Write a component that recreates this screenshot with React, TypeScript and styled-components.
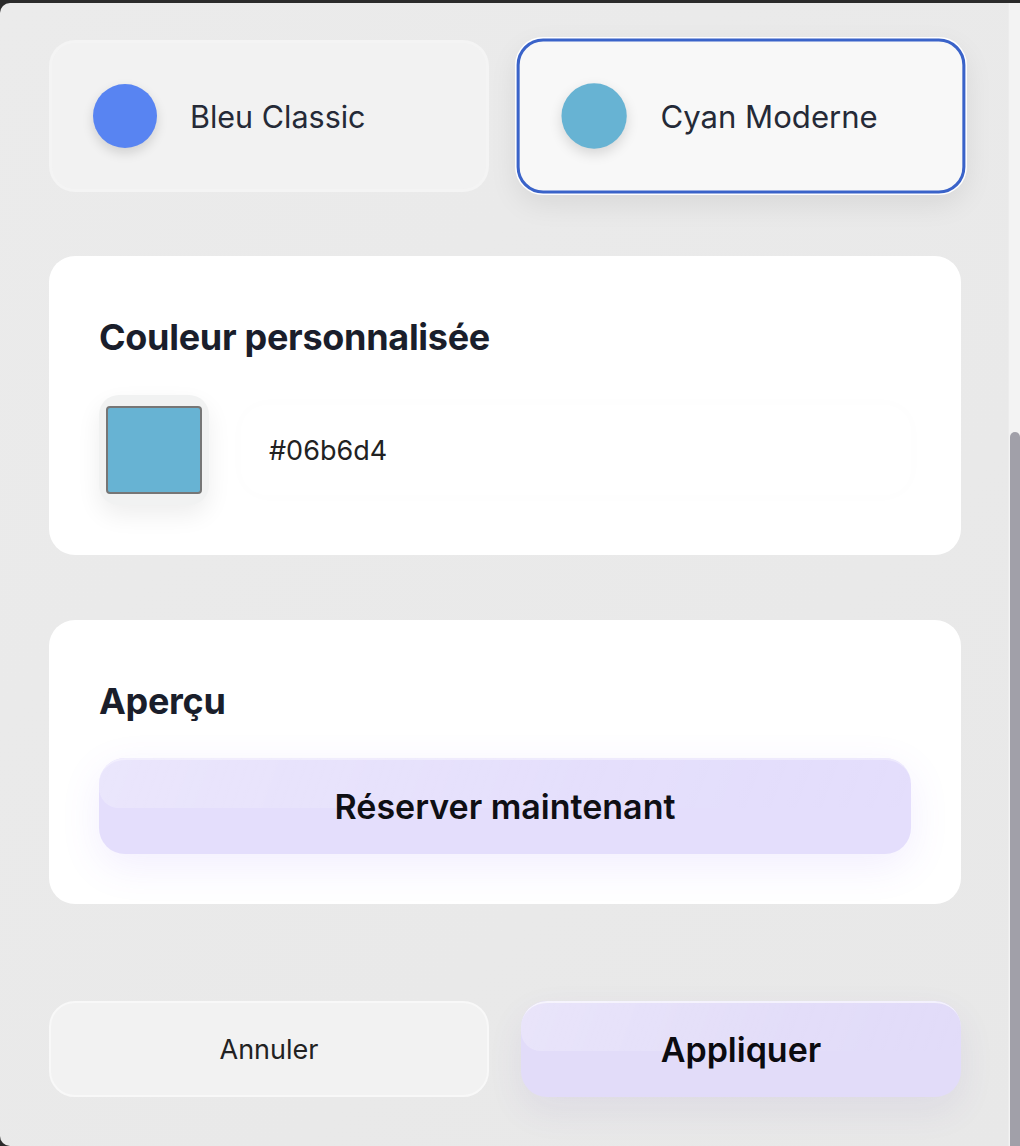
import React from "react";
import styled, { createGlobalStyle, css } from "styled-components";

const Global = createGlobalStyle`
  html, body { margin: 0; padding: 0; background: #2b2b2b; }
  body { font-family: Inter, "Noto Sans", "Liberation Sans", sans-serif; -webkit-font-smoothing: antialiased; }
  * { box-sizing: border-box; }
`;

const Panel = styled.div`
  margin-top: 3px;
  height: 1143px;
  width: 1020px;
  display: flex;
  background: linear-gradient(135deg, #ebebeb 0%, #e8e8e8 100%);
  border-radius: 10px 0 0 10px;
  overflow: hidden;
`;

const Content = styled.div`
  flex: 1;
  display: flex;
  flex-direction: column;
  padding: 37px 47px 0 49px;
`;

const Track = styled.div`
  width: 12px;
  background: #f3f3f3;
  display: flex;
  flex-direction: column;
  justify-content: flex-end;
  border-left: 1px solid #ececec;
`;

const Thumb = styled.div`
  height: 714px;
  margin-left: 1px;
  background: #a1a0a9;
  border-radius: 6px 6px 0 0;
`;

const ThemeRow = styled.div`
  display: grid;
  grid-template-columns: 1fr 1fr;
  gap: 32px;
`;

const ThemeCard = styled.div<{ $selected?: boolean }>`
  height: 152px;
  display: flex;
  align-items: center;
  gap: 33px;
  padding-left: 41px;
  border-radius: 26px;
  background: #f2f2f2;
  border: 3px solid rgba(244, 244, 244, 0.9);
  ${(p) =>
    p.$selected &&
    css`
      background: #f8f8f8;
      border: 3px solid #3a63c9;
      box-shadow: 0 0 0 1.5px #ffffff, 0 10px 28px rgba(0, 0, 0, 0.08);
      transform: scale(1.02);
    `}
`;

const Dot = styled.div<{ $color: string }>`
  width: 64px;
  height: 64px;
  border-radius: 50%;
  background: ${(p) => p.$color};
  box-shadow: 0 5px 12px rgba(0, 0, 0, 0.14);
  flex-shrink: 0;
`;

const ThemeName = styled.span`
  font-size: 30.5px;
  font-weight: 400;
  color: #252a37;
`;

const Card = styled.div<{ $top: number }>`
  margin-top: ${(p) => p.$top}px;
  background: #ffffff;
  border-radius: 26px;
  padding: 50px;
  display: flex;
  flex-direction: column;
`;

const CardTitle = styled.h2`
  margin: 0;
  padding-top: 4px;
  font-size: 36px;
  line-height: 54px;
  font-weight: 700;
  letter-spacing: -0.3px;
  color: #1a1e2b;
`;

const ColorRow = styled.div`
  margin-top: 31px;
  display: flex;
  align-items: center;
  gap: 32px;
`;

const SwatchWrap = styled.div`
  width: 110px;
  height: 110px;
  border-radius: 20px;
  background: #f1f2f2;
  display: flex;
  align-items: center;
  justify-content: center;
  box-shadow: 0 10px 24px rgba(0, 0, 0, 0.07);
  flex-shrink: 0;
`;

const Swatch = styled.div<{ $color: string }>`
  width: 96px;
  height: 88px;
  border: 2px solid #767676;
  border-radius: 4px;
  background: ${(p) => p.$color};
`;

const HexInput = styled.div`
  flex: 1;
  height: 90px;
  border-radius: 26px;
  background: #ffffff;
  box-shadow: 0 0 18px rgba(0, 0, 0, 0.015);
  display: flex;
  align-items: center;
  padding-left: 28px;
  font-size: 27px;
  color: #222222;
`;

const PreviewButton = styled.div`
  position: relative;
  margin-top: 30px;
  height: 96px;
  border-radius: 26px;
  background: #e4defc;
  display: flex;
  align-items: center;
  justify-content: center;
  font-size: 34px;
  font-weight: 600;
  color: #0f0f14;
  box-shadow: 0 12px 40px rgba(124, 92, 246, 0.1);
  overflow: hidden;
  &::before {
    content: "";
    position: absolute;
    left: 0;
    right: 0;
    top: 0;
    height: 48px;
    border-radius: 26px 26px 20px 20px;
    background: linear-gradient(110deg, rgba(255,255,255,0.25), rgba(255,255,255,0.05) 60%, rgba(255,255,255,0));
    border-top: 2px solid rgba(255, 255, 255, 0.35);
  }
`;

const Label = styled.span`
  position: relative;
`;

const Actions = styled.div`
  margin-top: 97px;
  display: grid;
  grid-template-columns: 1fr 1fr;
  gap: 32px;
`;

const ActionButton = styled.div<{ $primary?: boolean }>`
  position: relative;
  height: 96px;
  border-radius: 26px;
  display: flex;
  align-items: center;
  justify-content: center;
  overflow: hidden;
  ${(p) =>
    p.$primary
      ? css`
          background: #e2dcf9;
          font-size: 34px;
          font-weight: 600;
          color: #0b0b10;
          box-shadow: 0 14px 36px rgba(90, 70, 160, 0.08);
          &::before {
            content: "";
            position: absolute;
            left: 0;
            right: 0;
            top: 0;
            height: 48px;
            border-radius: 26px 26px 20px 20px;
            background: linear-gradient(110deg, rgba(255,255,255,0.25), rgba(255,255,255,0.05) 60%, rgba(255,255,255,0));
            border-top: 2px solid rgba(255, 255, 255, 0.6);
          }
        `
      : css`
          background: #f2f2f2;
          border: 2px solid #f8f8f8;
          font-size: 27px;
          font-weight: 400;
          color: #222222;
        `}
`;

export default function App() {
  return (
    <>
      <Global />
      <Panel>
        <Content>
          <ThemeRow>
            <ThemeCard>
              <Dot $color="#5884f2" />
              <ThemeName>Bleu Classic</ThemeName>
            </ThemeCard>
            <ThemeCard $selected>
              <Dot $color="#67b3d3" />
              <ThemeName>Cyan Moderne</ThemeName>
            </ThemeCard>
          </ThemeRow>

          <Card $top={64}>
            <CardTitle>Couleur personnalisée</CardTitle>
            <ColorRow>
              <SwatchWrap>
                <Swatch $color="#67b3d3" />
              </SwatchWrap>
              <HexInput>#06b6d4</HexInput>
            </ColorRow>
          </Card>

          <Card $top={65}>
            <CardTitle>Aperçu</CardTitle>
            <PreviewButton>
              <Label>Réserver maintenant</Label>
            </PreviewButton>
          </Card>

          <Actions>
            <ActionButton>Annuler</ActionButton>
            <ActionButton $primary>
              <Label>Appliquer</Label>
            </ActionButton>
          </Actions>
        </Content>
        <Track>
          <Thumb />
        </Track>
      </Panel>
    </>
  );
}
